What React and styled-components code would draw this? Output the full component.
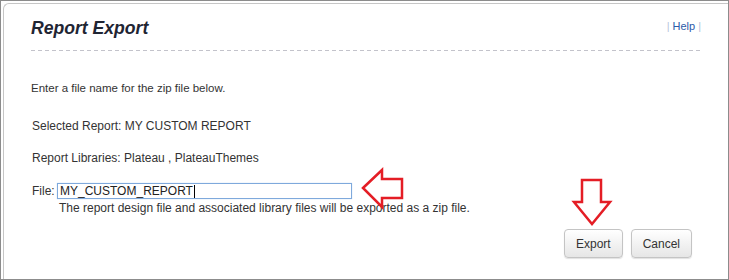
import React from 'react'
import styled, {createGlobalStyle} from 'styled-components'

const GlobalStyle = createGlobalStyle`
  body {
    margin: 0;
    background: #ffffff;
    font-family: "Liberation Sans", Arial, sans-serif;
  }
`

const Frame = styled.div`
  position: relative;
  width: 729px;
  height: 280px;
  box-sizing: border-box;
  border: 1px solid #8c8c8c;
  background: #fff;
  overflow: hidden;
`

const Panel = styled.div`
  margin: 2px 0 0 2px;
  height: calc(100% - 2px);
  box-sizing: border-box;
  border-top: 1px solid #c6c6c6;
  border-left: 1px solid #c6c6c6;
  border-top-left-radius: 6px;
  padding: 14px 27px 0 27px;
`

const Header = styled.div`
  display: flex;
  justify-content: space-between;
  align-items: flex-start;
  height: 33px;
  background-image: linear-gradient(to right, #c3c3cb 4px, transparent 4px);
  background-size: 7px 1px;
  background-repeat: repeat-x;
  background-position: left bottom;
`

const Title = styled.h1`
  margin: 0;
  font-size: 17.6px;
  line-height: 21px;
  font-weight: bold;
  font-style: italic;
  color: #1f2533;
`

const HelpLinks = styled.div`
  margin: 2px -3px 0 0;
  font-size: 11px;
  line-height: 13px;
  color: #2b5aa8;
`

const Pipe = styled.span`
  color: #b8c4dc;
  margin: 0 3px;
`

const Body = styled.div`
  padding-top: 30px;
  font-size: 12px;
  line-height: 14px;
  color: #333;
`

const Line = styled.p`
  margin: 0 0 ${props => props.gap}px ${props => props.indent || 0}px;
  font-size: ${props => props.size || 12}px;
`

const FileRow = styled.div`
  display: flex;
  align-items: flex-start;
  margin-left: 1px;
`

const FileLabel = styled.span`
  width: 25px;
  line-height: 14px;
  margin-top: 1px;
`

const FileColumn = styled.div`
  display: flex;
  flex-direction: column;
`

const TextBox = styled.div`
  width: 295px;
  height: 16px;
  box-sizing: border-box;
  border: 1px solid #7fa9dc;
  box-shadow: 0 0 1px #b9d3f2;
  padding: 0 2px;
  font-size: 12px;
  line-height: 14px;
  color: #222;
  display: flex;
  align-items: center;
`

const Caret = styled.span`
  display: inline-block;
  width: 1px;
  height: 13px;
  background: #000;
  margin-left: 1px;
`

const Hint = styled.div`
  margin-top: 2px;
  padding-left: 2px;
`

const ButtonRow = styled.div`
  display: flex;
  justify-content: flex-end;
  gap: 8px;
  margin-top: 14px;
  padding-right: 9px;
`

const Button = styled.button`
  height: 29px;
  padding: 0 ${props => props.pad}px;
  border: 1px solid #c4c4c4;
  border-radius: 4px;
  background: linear-gradient(#ffffff, #e6e6e6);
  box-shadow: 0 1px 1px rgba(0, 0, 0, 0.12);
  font-family: "Liberation Sans", Arial, sans-serif;
  font-size: 12px;
  color: #333;
  cursor: pointer;
`

const Arrow = styled.svg`
  position: absolute;
  left: ${props => props.x}px;
  top: ${props => props.y}px;
  overflow: visible;
`

const ArrowShape = styled.polygon`
  fill: #fff;
  stroke: #e41d25;
  stroke-width: 2.5;
  stroke-linejoin: miter;
`

export default function App() {
    return (
        <>
            <GlobalStyle/>
            <Frame>
                <Panel>
                    <Header>
                        <Title>Report Export</Title>
                        <HelpLinks><Pipe>|</Pipe>Help<Pipe>|</Pipe></HelpLinks>
                    </Header>
                    <Body>
                        <Line gap={24} size={11.5}>Enter a file name for the zip file below.</Line>
                        <Line gap={18} indent={1}>Selected Report: MY CUSTOM REPORT</Line>
                        <Line gap={18} indent={1}>Report Libraries: Plateau , PlateauThemes</Line>
                        <FileRow>
                            <FileLabel>File:</FileLabel>
                            <FileColumn>
                                <TextBox>MY_CUSTOM_REPORT<Caret/></TextBox>
                                <Hint>The report design file and associated library files will be exported as a zip file.</Hint>
                            </FileColumn>
                        </FileRow>
                        <ButtonRow>
                            <Button pad={11}>Export</Button>
                            <Button pad={11}>Cancel</Button>
                        </ButtonRow>
                    </Body>
                </Panel>
                <Arrow x={359} y={165} width="46" height="44" viewBox="0 0 46 44">
                    <ArrowShape points="3,22 22,4 22,13 42,13 42,32 22,32 22,41"/>
                </Arrow>
                <Arrow x={569} y={176} width="42" height="50" viewBox="0 0 42 50">
                    <ArrowShape points="12,3 31,3 31,25 40,25 22,47 4,25 12,25"/>
                </Arrow>
            </Frame>
        </>
    )
}
